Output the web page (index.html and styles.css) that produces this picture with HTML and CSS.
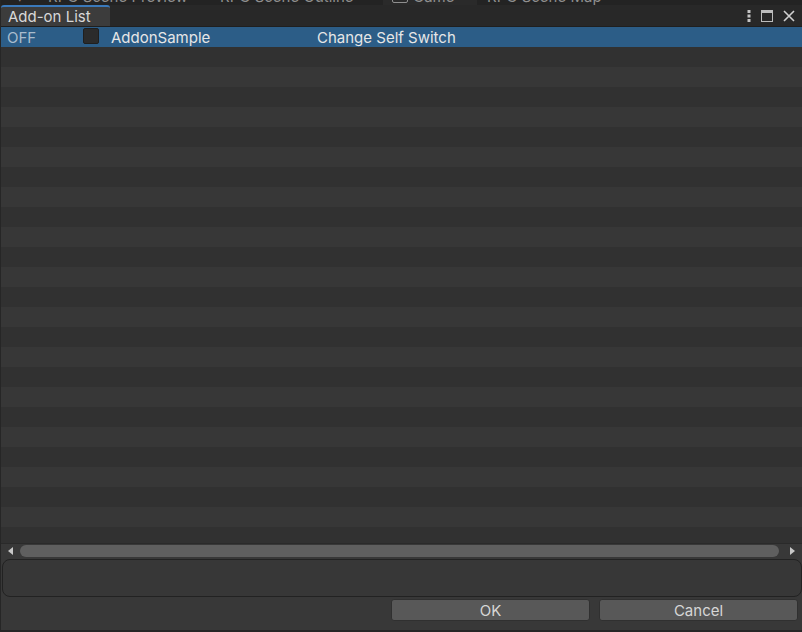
FILE: index.html
```html
<!DOCTYPE html>
<html lang="en">
<head>
    <meta charset="UTF-8">
    <title>Add-on List</title>
    <link rel="stylesheet" href="styles.css">
</head>
<body>
    <div class="window">
        <!-- tabs of the docked windows behind, mostly cut off -->
        <div class="back-tabs">
            <div class="back-tabs-line">
                <span class="back-tab back-tab-menu">&#9662;</span>
                <span class="back-tab back-tab-preview">RPG Scene Preview</span>
                <span class="back-tab back-tab-outline">RPG Scene Outline</span>
                <span class="back-tab back-tab-game"><span class="game-icon"></span>Game</span>
                <span class="back-tab back-tab-map">RPG Scene Map</span>
            </div>
        </div>

        <div class="tab-bar">
            <div class="tab">Add-on List</div>
            <div class="tab-tools">
                <svg class="tool" width="6" height="14" viewBox="0 0 6 14">
                    <rect x="1.5" y="1" width="3" height="3" fill="#c4c4c4"/>
                    <rect x="1.5" y="5.5" width="3" height="3" fill="#c4c4c4"/>
                    <rect x="1.5" y="10" width="3" height="3" fill="#c4c4c4"/>
                </svg>
                <svg class="tool" width="14" height="14" viewBox="0 0 14 14">
                    <rect x="1.5" y="1.5" width="11" height="11" fill="none" stroke="#bdbdbd" stroke-width="1"/>
                    <rect x="1.5" y="1.5" width="11" height="2.5" fill="#bdbdbd"/>
                </svg>
                <svg class="tool" width="14" height="14" viewBox="0 0 14 14">
                    <path d="M2 2 L12 12 M12 2 L2 12" stroke="#d0d0d0" stroke-width="1.6"/>
                </svg>
            </div>
        </div>

        <div class="list">
            <div class="row row-selected">
                <span class="col-state">OFF</span>
                <span class="col-check"><span class="checkbox"></span></span>
                <span class="col-name">AddonSample</span>
                <span class="col-desc">Change Self Switch</span>
            </div>
            <div class="row"></div><div class="row"></div><div class="row"></div><div class="row"></div>
            <div class="row"></div><div class="row"></div><div class="row"></div><div class="row"></div>
            <div class="row"></div><div class="row"></div><div class="row"></div><div class="row"></div>
            <div class="row"></div><div class="row"></div><div class="row"></div><div class="row"></div>
            <div class="row"></div><div class="row"></div><div class="row"></div><div class="row"></div>
            <div class="row"></div><div class="row"></div><div class="row"></div><div class="row"></div>
            <div class="row"></div>
        </div>

        <div class="hscroll">
            <span class="arrow arrow-left"></span>
            <div class="thumb"></div>
            <span class="arrow arrow-right"></span>
        </div>

        <div class="help-box"></div>

        <div class="buttons">
            <button class="btn">OK</button>
            <button class="btn">Cancel</button>
        </div>
        <div class="bottom-edge"></div>
    </div>
</body>
</html>
```

FILE: styles.css
```css
html, body {
    margin: 0;
    padding: 0;
    background: #383838;
}

body {
    width: 802px;
    height: 632px;
    overflow: hidden;
    font-family: Inter, "Liberation Sans", sans-serif;
    font-size: 15px;
    color: #d2d2d2;
}

.window {
    display: flex;
    flex-direction: column;
    height: 632px;
    border-left: 1px solid #262626;
    box-sizing: border-box;
}

/* docked tabs behind the popup */
.back-tabs {
    height: 5px;
    flex-shrink: 0;
    overflow: hidden;
    background: #232323;
}

.back-tabs-line {
    display: flex;
    margin-top: -11px;
    height: 16px;
    line-height: 16px;
    color: #8f8f8f;
    white-space: nowrap;
}

.back-tab {
    box-sizing: border-box;
    flex-shrink: 0;
}

.back-tab-menu {
    width: 47px;
    padding-left: 15px;
}

.back-tab-preview {
    width: 172px;
}

.back-tab-outline {
    width: 163px;
}

.back-tab-game {
    width: 94px;
    padding-left: 9px;
    background: #2a2a2a;
}

.game-icon {
    display: inline-block;
    width: 16px;
    height: 12px;
    margin-right: 5px;
    vertical-align: -1px;
    border: 1px solid #8f8f8f;
    border-radius: 2px;
    box-sizing: border-box;
}

.back-tab-map {
    margin-left: 10px;
}

/* window tab bar */
.tab-bar {
    height: 21px;
    flex-shrink: 0;
    display: flex;
    align-items: stretch;
    background: #282828;
    border-bottom: 1px solid #1f1f1f;
}

.tab {
    width: 109px;
    box-sizing: border-box;
    padding-left: 7px;
    border-top: 2px solid #3a79bb;
    border-radius: 3px 3px 0 0;
    background: #3c3c3c;
    color: #d8d8d8;
    line-height: 19px;
}

.tab-tools {
    margin-left: auto;
    display: flex;
    align-items: center;
    gap: 8px;
    padding-right: 6px;
}

.tool {
    display: block;
}

/* list */
.list {
    flex: 1;
    overflow: hidden;
    background: #373737;
}

.row {
    height: 20px;
    display: flex;
    align-items: center;
    background: #313131;
}

.row:nth-child(odd) {
    background: #373737;
}

.row.row-selected {
    background: #2c5d87;
    color: #e6e6e6;
}

.col-state {
    width: 82px;
    padding-left: 6px;
    color: #a9bccd;
    box-sizing: border-box;
}

.col-check {
    width: 28px;
    display: flex;
}

.checkbox {
    width: 14px;
    height: 14px;
    margin-top: -3px;
    border-radius: 2px;
    background: #2b2b2b;
    border: 1px solid #1f1f1f;
}

.col-name {
    width: 206px;
}

/* horizontal scrollbar */
.hscroll {
    height: 14px;
    flex-shrink: 0;
    display: flex;
    align-items: center;
    background: #383838;
    border-top: 1px solid #2a2a2a;
}

.arrow {
    width: 0;
    height: 0;
    border-top: 4px solid transparent;
    border-bottom: 4px solid transparent;
}

.arrow-left {
    margin: 0 7px 0 7px;
    border-right: 5px solid #c8c8c8;
}

.arrow-right {
    margin: 0 7px 0 11px;
    border-left: 5px solid #c8c8c8;
}

.thumb {
    flex: 1;
    height: 12px;
    border-radius: 6px;
    background: #5f5f5f;
}

/* help text box */
.help-box {
    height: 36px;
    flex-shrink: 0;
    margin: 1px 0 0 1px;
    background: #373737;
    border: 1px solid #222222;
    border-radius: 8px;
}

.buttons {
    display: flex;
    flex-shrink: 0;
    justify-content: flex-end;
    gap: 9px;
    padding: 2px 4px 0 0;
    height: 31px;
}

.btn {
    width: 199px;
    height: 22px;
    padding: 0;
    font-family: Inter, "Liberation Sans", sans-serif;
    font-size: 15px;
    color: #d6d6d6;
    background: #585858;
    border: 1px solid #303030;
    border-radius: 3px;
}

.bottom-edge {
    height: 2px;
    flex-shrink: 0;
    background: #262626;
}
```
